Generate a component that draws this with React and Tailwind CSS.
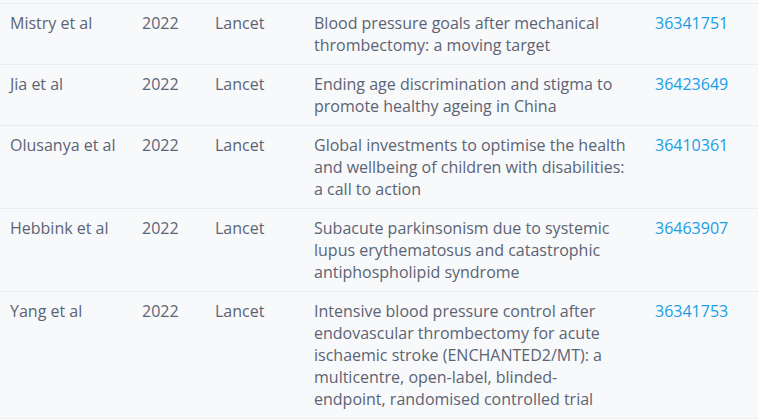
import React from 'react';

const rows = [
  { author: 'Mistry et al', year: '2022', journal: 'Lancet', title: 'Blood pressure goals after mechanical thrombectomy: a moving target', pmid: '36341751' },
  { author: 'Jia et al', year: '2022', journal: 'Lancet', title: 'Ending age discrimination and stigma to promote healthy ageing in China', pmid: '36423649' },
  { author: 'Olusanya et al', year: '2022', journal: 'Lancet', title: 'Global investments to optimise the health and wellbeing of children with disabilities: a call to action', pmid: '36410361' },
  { author: 'Hebbink et al', year: '2022', journal: 'Lancet', title: 'Subacute parkinsonism due to systemic lupus erythematosus and catastrophic antiphospholipid syndrome', pmid: '36463907' },
  { author: 'Yang et al', year: '2022', journal: 'Lancet', title: 'Intensive blood pressure control after endovascular thrombectomy for acute ischaemic stroke (ENCHANTED2/MT): a multicentre, open-label, blinded-endpoint, randomised controlled trial', pmid: '36341753' },
];

export default function App() {
  return (
    <div className="w-[758px] h-[419px] overflow-hidden bg-[#f8f9fa] pt-[3px] font-['Open_Sans',sans-serif] text-[16px] leading-[22px] text-[#5b6475]">
      <table className="w-full table-fixed border-collapse">
        <colgroup>
          <col className="w-[132px]" />
          <col className="w-[73px]" />
          <col className="w-[99px]" />
          <col className="w-[341px]" />
          <col />
        </colgroup>
        <tbody>
          {rows.map(r => (
            <tr key={r.pmid} className="border-t border-b border-[#e9edf2] align-top">
              <td className="px-[10px] py-2">{r.author}</td>
              <td className="px-[10px] py-2">{r.year}</td>
              <td className="px-[10px] py-2">{r.journal}</td>
              <td className="pl-[10px] pr-[17px] py-2">{r.title}</td>
              <td className="px-[10px] py-2">
                <a href="#" className="text-[#1a9de6]">{r.pmid}</a>
              </td>
            </tr>
          ))}
        </tbody>
      </table>
    </div>
  );
}
